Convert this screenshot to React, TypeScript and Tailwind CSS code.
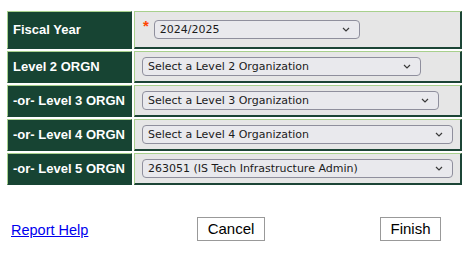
import React from "react";

type Row = {
  label: string;
  value: string;
  width: string;
  required?: boolean;
};

const rows: Row[] = [
  { label: "Fiscal Year", value: "2024/2025", width: "w-[206px]", required: true },
  { label: "Level 2 ORGN", value: "Select a Level 2 Organization", width: "w-[279px]" },
  { label: "-or- Level 3 ORGN", value: "Select a Level 3 Organization", width: "w-[297px]" },
  { label: "-or- Level 4 ORGN", value: "Select a Level 4 Organization", width: "w-[311px]" },
  { label: "-or- Level 5 ORGN", value: "263051 (IS Tech Infrastructure Admin)", width: "w-[311px]" },
];

function FakeSelect({ value, width }: { value: string; width: string }) {
  return (
    <div
      className={`${width} h-[19px] flex items-center justify-between pl-[5px] pr-[9px] rounded-[4px] border border-[#8f8f9d] bg-[#e9e9ed] text-[11px] text-[#1b1b1b] font-['DejaVu_Sans',sans-serif] leading-none`}
    >
      <span className="whitespace-nowrap">{value}</span>
      <svg width="8" height="5" viewBox="0 0 8 5" className="shrink-0">
        <path d="M1 1 L4 4 L7 1" fill="none" stroke="#3a3a3a" strokeWidth="1.2" />
      </svg>
    </div>
  );
}

export default function App() {
  return (
    <div className="w-[470px] h-[254px] bg-white font-['Liberation_Sans',Arial,sans-serif]">
      <div className="pt-[11px] pl-[7px]">
        <div className="flex flex-col gap-[2px] w-[455px]">
          {rows.map((r, i) => (
            <div key={r.label} className={`flex gap-[2px] ${i === 0 ? "h-[38px]" : "h-[32px]"}`}>
              {/* label cell */}
              <div className="w-[125px] flex items-center pl-[5px] bg-[#174433] border border-[#a8d08d] border-r-[#174433] border-b-[#174433] text-white font-bold text-[13px]">
                {r.label}
              </div>
              {/* value cell */}
              <div className="flex-1 flex items-center pl-[7px] bg-[#e6e6e6] border border-[#a8d08d] border-r-[#1c4536] border-b-[#1c4536] border-r-2 border-b-2">
                {r.required && (
                  <span className="text-[#ff4500] text-[15px] font-bold leading-none self-start mt-[6px] mr-[5px] ml-[1px]">*</span>
                )}
                <FakeSelect value={r.value} width={r.width} />
              </div>
            </div>
          ))}
        </div>
      </div>

      {/* FOOTER BUTTONS */}
      <div className="flex items-center mt-[31px] pl-[11px]">
        <div className="w-[186px] pt-[2px]">
          <a href="#" className="text-[#0000ee] underline text-[14.5px]">
            Report Help
          </a>
        </div>
        <div className="w-[183px]">
          <button className="w-[68px] h-[24px] border border-[#999] bg-white text-black text-[15px] leading-none">
            Cancel
          </button>
        </div>
        <div>
          <button className="w-[61px] h-[24px] border border-[#999] bg-white text-black text-[15px] leading-none">
            Finish
          </button>
        </div>
      </div>
    </div>
  );
}
